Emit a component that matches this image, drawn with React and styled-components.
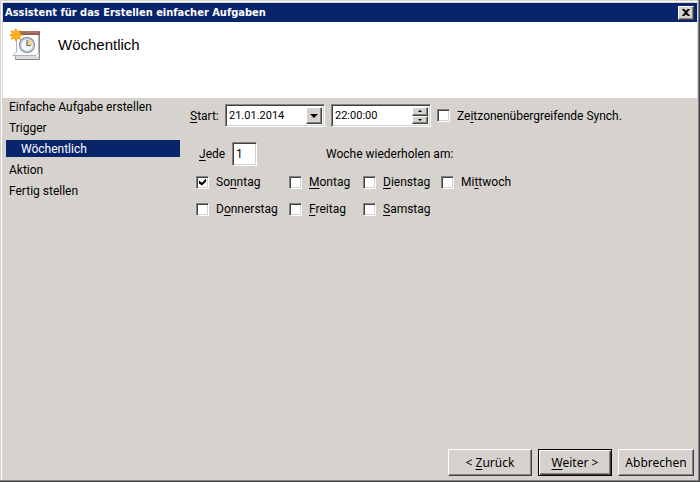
import React, { useState } from "react";
import styled, { createGlobalStyle, css } from "styled-components";

const steps = [
  { name: "Einfache Aufgabe erstellen" },
  { name: "Trigger" },
  { name: "Wöchentlich", active: true },
  { name: "Aktion" },
  { name: "Fertig stellen" },
];

// "key" is the position of the underlined access key letter
const days = [
  { name: "Sonntag", key: 2, checked: true },
  { name: "Montag", key: 0 },
  { name: "Dienstag", key: 0 },
  { name: "Mittwoch", key: 2 },
  { name: "Donnerstag", key: 1 },
  { name: "Freitag", key: 0 },
  { name: "Samstag", key: 0 },
];

const AccessText = ({ text, at }) => (
  <span>
    {text.slice(0, at)}
    <u>{text[at]}</u>
    {text.slice(at + 1)}
  </span>
);

const TaskIcon = () => (
  <svg width="32" height="34" viewBox="0 0 32 34" aria-hidden="true">
    <path d="M7 27H31V32H7z" fill="#dcdadf" />
    <path d="M6 31.500H30.500V4" fill="none" stroke="#8d878d" />
    <path d="M6.500 28V31" stroke="#a9a4aa" />
    <path d="M8 6H29V28H5L7 24z" fill="#fcfcfd" />
    <path d="M7.500 12V24L4 27.500H27L29.500 25V6" fill="none" stroke="#b4b0b5" />
    <path d="M8 3H31V7H8z" fill="#94604f" />
    <path d="M10 4H30" stroke="#b98d7b" />
    <circle cx="18" cy="17" r="8" fill="#7b8594" />
    <circle cx="18" cy="17" r="7" fill="#ccd4de" />
    <circle cx="18" cy="17" r="5.5" fill="#f4f7fa" />
    <path d="M18 17V11.500A5.500 5.500 0 0 1 23.500 17z" fill="#f3d58a" />
    <path d="M18 12V17.500H22" fill="none" stroke="#5f6a7d" strokeWidth="1.2" />
    <path
      d="M7 0L8.500 3.500L12 2L11 5.500L14.500 7L11 8.500L12 12L8.500 10.500L7 14L5 10.500L1.500 12L3 8.500L0 7L3 5.500L1.500 2L5 3.500z"
      fill="#f29a18"
    />
    <circle cx="7" cy="7" r="4" fill="#ffb01f" />
  </svg>
);

const Assistant = () => {
  const [date, setDate] = useState("21.01.2014");
  const [time, setTime] = useState("22:00:00");
  const [weeks, setWeeks] = useState("1");

  return (
    <Window>
      <TitleBar>
        <h1>Assistent für das Erstellen einfacher Aufgaben</h1>
        <CloseButton type="button" aria-label="Schließen">
          <svg width="8" height="7" viewBox="0 0 8 7" aria-hidden="true">
            <path
              d="M0 0H2L4 2L6 0H8L5 3.500L8 7H6L4 5L2 7H0L3 3.500z"
              fill="#000"
              stroke="#000"
              strokeWidth=".4"
            />
          </svg>
        </CloseButton>
      </TitleBar>
      <Header>
        <TaskIcon />
        <h2>Wöchentlich</h2>
      </Header>
      <Body>
        <Steps>
          {steps.map((step) => (
            <Step
              key={step.name}
              $active={step.active}
              aria-current={step.active ? "step" : undefined}
            >
              {step.name}
            </Step>
          ))}
        </Steps>
        <Form>
          <StartRow>
            <label htmlFor="date">
              <AccessText text="Start:" at={0} />
            </label>
            <Field>
              <input
                id="date"
                value={date}
                onChange={(e) => setDate(e.target.value)}
              />
              <DropButton type="button" aria-label="Kalender öffnen">
                <Arrow />
              </DropButton>
            </Field>
            <Field>
              <input
                aria-label="Uhrzeit"
                value={time}
                onChange={(e) => setTime(e.target.value)}
              />
              <Spinner>
                <SpinButton type="button" aria-label="Später">
                  <Arrow $small $up />
                </SpinButton>
                <SpinButton type="button" aria-label="Früher">
                  <Arrow $small />
                </SpinButton>
              </Spinner>
            </Field>
            <CheckLabel>
              <Check type="checkbox" />
              <AccessText text="Zeitzonenübergreifende Synch." at={2} />
            </CheckLabel>
          </StartRow>
          <WeekRow>
            <label htmlFor="weeks">
              <AccessText text="Jede" at={0} />
            </label>
            <WeekInput
              id="weeks"
              value={weeks}
              onChange={(e) => setWeeks(e.target.value)}
            />
            <WeekText>Woche wiederholen am:</WeekText>
          </WeekRow>
          <Days>
            {days.map((day) => (
              <CheckLabel key={day.name}>
                <Check type="checkbox" defaultChecked={day.checked} />
                <AccessText text={day.name} at={day.key} />
              </CheckLabel>
            ))}
          </Days>
        </Form>
      </Body>
      <Footer>
        <Button type="button" $width="84px">
          <AccessText text="< Zurück" at={2} />
        </Button>
        <Button type="button" $width="74px" $primary>
          <AccessText text="Weiter >" at={0} />
        </Button>
        <Button type="button" $width="76px">
          Abbrechen
        </Button>
      </Footer>
    </Window>
  );
};

const App = () => (
  <>
    <GlobalStyle />
    <Assistant />
  </>
);

export default App;

const GlobalStyle = createGlobalStyle`
  * {
    box-sizing: border-box;
  }
  body {
    margin: 0;
    background: #d6d3ce;
    color: #000;
    font: 12px/18px Roboto, "Noto Sans", sans-serif;
  }
  button, input {
    font: inherit;
    color: inherit;
  }
  u {
    text-underline-offset: 2px;
  }
`;

const raised = css`
  background: #d6d3ce;
  border: 1px solid;
  border-color: #fff #424142 #424142 #fff;
  box-shadow: inset -1px -1px #848284;
`;

const sunken = css`
  background: #fff;
  border: 1px solid;
  border-color: #848284 #fff #fff #848284;
  box-shadow: inset 1px 1px #424142, inset -1px -1px #d6d3ce;
`;

const Window = styled.main`
  display: flex;
  flex-direction: column;
  min-height: 100vh;
  padding: 3px;
  background: #d6d3ce;
  box-shadow: inset -1px -1px #424142, inset -2px -2px #848284,
    inset 1px 1px #d6d3ce, inset 2px 2px #fff;
`;

const TitleBar = styled.header`
  display: flex;
  align-items: center;
  justify-content: space-between;
  height: 19px;
  padding: 0 3px 0 2px;
  background: #08246b;

  h1 {
    margin: 0;
    color: #fff;
    font-family: "DejaVu Sans Condensed", "Noto Sans", sans-serif;
    font-size: 11px;
    line-height: 18px;
    font-weight: 700;
  }
`;

const CloseButton = styled.button`
  ${raised}
  display: flex;
  align-items: center;
  justify-content: center;
  width: 16px;
  height: 14px;
  padding: 0;
`;

const Header = styled.section`
  display: flex;
  align-items: flex-start;
  gap: 17px;
  height: 76px;
  padding: 6px;
  background: #fff;

  h2 {
    margin: 7px 0 0;
    font-family: "Liberation Sans", sans-serif;
    font-size: 15px;
    line-height: 20px;
    font-weight: 400;
  }
`;

const Body = styled.div`
  display: grid;
  grid-template-columns: 177px 1fr;
  gap: 10px;
  flex: 1;
`;

const Steps = styled.ol`
  margin: 0;
  padding: 0 0 0 3px;
  list-style: none;
`;

const Step = styled.li`
  height: 17px;
  margin-bottom: 4px;
  padding-left: ${(props) => (props.$active ? "15px" : "3px")};
  background: ${(props) => (props.$active ? "#08246b" : "transparent")};
  color: ${(props) => (props.$active ? "#fff" : "inherit")};
`;

const Form = styled.form`
  padding-top: 6px;
`;

const StartRow = styled.div`
  display: grid;
  grid-template-columns: 29px 100px 100px auto;
  align-items: center;
  column-gap: 6px;
`;

const Field = styled.div`
  ${sunken}
  display: flex;
  height: 23px;
  padding: 2px;

  input {
    flex: 1;
    min-width: 0;
    padding: 0 1px;
    border: 0;
    outline: 0;
    background: transparent;
    font-size: 11px;
  }
`;

const DropButton = styled.button`
  ${raised}
  display: flex;
  align-items: center;
  justify-content: center;
  width: 16px;
  padding: 0;
`;

const Spinner = styled.div`
  display: grid;
  grid-template-rows: 1fr 1fr;
  width: 16px;
`;

const SpinButton = styled(DropButton)`
  min-height: 0;
`;

const Arrow = styled.i`
  border: solid transparent;
  border-width: ${(props) => (props.$small ? "0 2px" : "0 4px")};
  ${(props) => (props.$up ? "border-bottom" : "border-top")}: ${(props) =>
    props.$small ? "2px" : "4px"} solid #000;
`;

const CheckLabel = styled.label`
  display: flex;
  align-items: center;
  gap: 7px;
  white-space: nowrap;
`;

const Check = styled.input`
  ${sunken}
  appearance: none;
  display: grid;
  place-items: center;
  flex: none;
  width: 13px;
  height: 13px;
  margin: 0;

  &:checked::before {
    content: "";
    width: 7px;
    height: 7px;
    background: #000;
    clip-path: polygon(0 29%, 43% 62%, 100% 0, 100% 43%, 43% 100%, 0 71%);
  }
`;

const WeekRow = styled.div`
  display: grid;
  grid-template-columns: 27px 25px auto;
  align-items: center;
  column-gap: 6px;
  margin-top: 15px;
  padding-left: 9px;
`;

const WeekText = styled.span`
  padding-left: 63px;
  white-space: nowrap;
`;

const WeekInput = styled.input`
  ${sunken}
  height: 24px;
  padding: 0 3px;
  outline: 0;
`;

const Days = styled.div`
  display: grid;
  grid-template-columns: 93px 74px 78px auto;
  row-gap: 9px;
  margin-top: 7px;
  padding-left: 6px;
`;

const Footer = styled.footer`
  display: flex;
  justify-content: flex-end;
  gap: 6px;
  padding: 0 3px;
`;

const Button = styled.button`
  ${raised}
  width: ${(props) => props.$width};
  height: 27px;
  margin-bottom: 3px;
  padding: 0;
  font-family: "Noto Sans", sans-serif;
  white-space: nowrap;
  ${(props) =>
    props.$primary &&
    css`
      border-color: #000;
      box-shadow: inset 1px 1px #fff, inset -1px -1px #424142,
        inset -2px -2px #848284;
    `}
`;
